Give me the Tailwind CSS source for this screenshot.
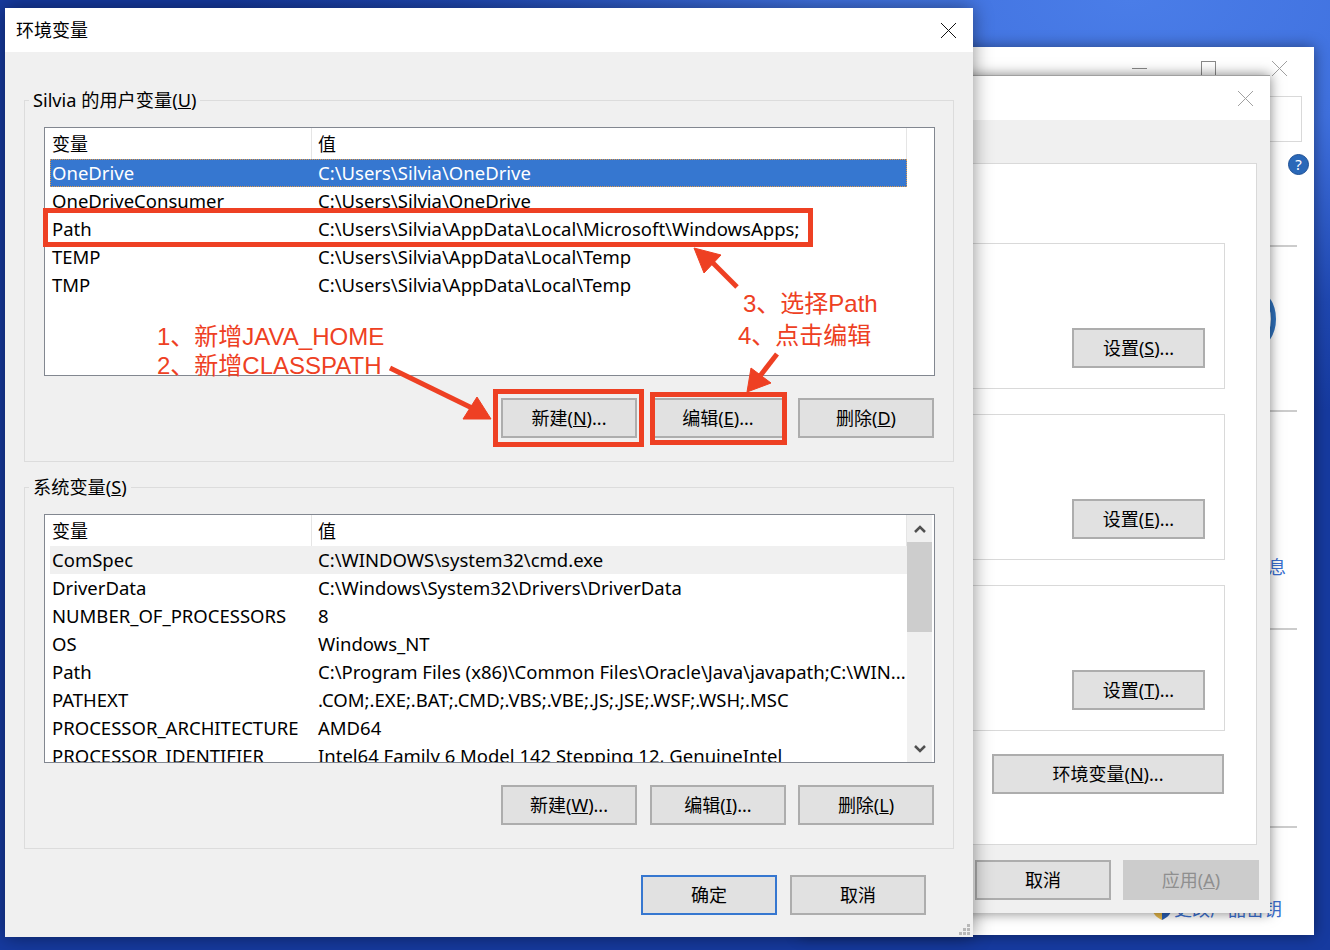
<!DOCTYPE html>
<html lang="zh-CN">

<head>
    <meta charset="utf-8">
    <title>环境变量</title>
    <script src="https://cdn.jsdelivr.net/npm/@tailwindcss/browser@4"></script>
</head>

<body class="m-0 overflow-hidden">
    <div class="relative w-[1330px] h-[950px] overflow-hidden bg-[radial-gradient(ellipse_900px_420px_at_1130px_0px,#4a7de8_0%,#3f70de_35%,#1f47b0_75%,#163a9f_100%)] bg-[#163a9f] text-black text-[18px] font-['Noto_Sans','Noto_Sans_CJK_SC',sans-serif]">

        <!-- Back window: system -->
        <div class="absolute left-[800px] top-[47px] w-[514px] h-[888px] bg-white shadow-[0_0_14px_rgba(0,0,0,0.45)]">
            <div class="absolute left-[332px] top-[21px] w-[15px] h-px bg-[#8a8a8a]"></div>
            <div class="absolute left-[401px] top-[14px] w-[15px] h-[15px] border border-[#8a8a8a]"></div>
            <svg class="absolute left-[472px] top-[14px]" width="15" height="15" viewBox="0 0 15 15" fill="none" stroke="#a0a0a0"><path d="M0 0L15 15M15 0L0 15" /></svg>
            <div class="absolute left-[380px] top-[49px] w-[122px] h-[46px] border border-[#d9d9d9]"></div>
            <div class="absolute left-[488px] top-[107px] w-[21px] h-[21px] rounded-full bg-[#2a68b8] border border-[#1d4f94] flex items-center justify-center text-white text-[15px] leading-none">?</div>
            <div class="absolute left-[300px] top-[198px] w-[197px] h-[2px] bg-[#cccccc]"></div>
            <div class="absolute left-[300px] top-[363px] w-[197px] h-[2px] bg-[#cccccc]"></div>
            <div class="absolute left-[300px] top-[581px] w-[197px] h-[2px] bg-[#cccccc]"></div>
            <div class="absolute left-[300px] top-[779px] w-[197px] h-[2px] bg-[#cccccc]"></div>
            <div class="absolute left-[400px] top-[234px] w-[76px] h-[76px] rounded-full border-[5px] border-[#2f72bd]"></div>
            <div class="absolute left-[440px] top-[508px] w-[46px] text-right text-[#3a6fd0] leading-6">信息</div>
            <svg class="absolute left-[353px] top-[853px]" width="18" height="20" viewBox="0 0 18 20"><path d="M9 0L18 3V10C18 15 13 18 9 20V0Z" fill="#2a5fb5" /><path d="M9 0L0 3V10C0 15 5 18 9 20V0Z" fill="#e6b84a" /></svg>
            <div class="absolute left-[374px] top-[850px] text-[#3a6fd0] leading-6 whitespace-nowrap">更改产品密钥</div>
        </div>

        <!-- Middle window: system properties -->
        <div class="absolute left-[900px] top-[75px] w-[370px] h-[838px] flex flex-col bg-[#f0f0f0] border-t border-[#a0a0a0] shadow-[0_0_12px_rgba(0,0,0,0.5)]">
            <div class="h-[44px] shrink-0 bg-white flex justify-end items-center pr-[17px]">
                <svg width="15" height="15" viewBox="0 0 15 15" fill="none" stroke="#a0a0a0"><path d="M0 0L15 15M15 0L0 15" /></svg>
            </div>
            <div class="mt-[43px] mr-[13px] h-[682px] shrink-0 bg-white border border-[#d9d9d9] pt-[79px] flex flex-col items-end">
                <div class="mr-[31px] w-[340px] h-[146px] border border-[#d9d9d9] flex justify-end items-end pr-[19px] pb-[20px]">
                    <button class="w-[133px] h-[40px] bg-[#e1e1e1] border-2 border-[#adadad] leading-none">设置(<u>S</u>)...</button>
                </div>
                <div class="mt-[25px] mr-[31px] w-[340px] h-[146px] border border-[#d9d9d9] flex justify-end items-end pr-[19px] pb-[20px]">
                    <button class="w-[133px] h-[40px] bg-[#e1e1e1] border-2 border-[#adadad] leading-none">设置(<u>E</u>)...</button>
                </div>
                <div class="mt-[25px] mr-[31px] w-[340px] h-[146px] border border-[#d9d9d9] flex justify-end items-end pr-[19px] pb-[20px]">
                    <button class="w-[133px] h-[40px] bg-[#e1e1e1] border-2 border-[#adadad] leading-none">设置(<u>T</u>)...</button>
                </div>
                <button class="mt-[23px] mr-[32px] w-[232px] h-[40px] bg-[#e1e1e1] border-2 border-[#adadad] leading-none">环境变量(<u>N</u>)...</button>
            </div>
            <div class="mt-[15px] pr-[11px] flex justify-end gap-3">
                <button class="w-[136px] h-[40px] bg-[#e1e1e1] border-2 border-[#adadad] leading-none">取消</button>
                <button class="w-[136px] h-[40px] bg-[#cccccc] border-2 border-[#cccccc] text-[#8f8f8f] leading-none">应用(<u>A</u>)</button>
            </div>
        </div>

        <!-- Front dialog -->
        <div class="absolute left-[5px] top-[8px] w-[968px] h-[929px] flex flex-col bg-[#f0f0f0] shadow-[0_0_18px_rgba(0,0,0,0.45)]">
            <div class="h-[44px] shrink-0 bg-white flex items-center justify-between pl-[11px] pr-[17px]">
                <span>环境变量</span>
                <svg width="15" height="15" viewBox="0 0 15 15" fill="none" stroke="#111111"><path d="M0 0L15 15M15 0L0 15" /></svg>
            </div>

            <!-- User variables -->
            <div class="relative mt-[48px] ml-[19px] w-[930px] h-[362px] shrink-0 border border-[#dcdcdc] pt-[26px] pl-[19px]">
                <span class="absolute left-[4px] -top-[13px] px-[4px] bg-[#f0f0f0] leading-6 text-[18.2px]">Silvia 的用户变量(<u>U</u>)</span>
                <div class="w-[891px] h-[249px] bg-white border border-[#828790] overflow-hidden text-[18.5px]">
                    <div class="flex h-[31px] ml-[5px] w-[857px] border-r border-[#e5e5e5] text-[18px]">
                        <div class="w-[262px] pl-[2px] pt-px leading-[31px] border-r border-[#e5e5e5]">变量</div>
                        <div class="pl-[6px] pt-px leading-[31px]">值</div>
                    </div>
                    <div class="flex h-[28px] ml-[5px] w-[857px] leading-[26px] bg-[#3677d0] text-white border border-dotted border-[#e09a4a]">
                        <div class="w-[262px] pl-[1px]">OneDrive</div><div class="pl-[5px]">C:\Users\Silvia\OneDrive</div>
                    </div>
                    <div class="flex h-[28px] ml-[5px] leading-[28px]"><div class="w-[263px] pl-[2px]">OneDriveConsumer</div><div class="pl-[5px]">C:\Users\Silvia\OneDrive</div></div>
                    <div class="flex h-[28px] ml-[5px] leading-[28px]"><div class="w-[263px] pl-[2px]">Path</div><div class="pl-[5px]">C:\Users\Silvia\AppData\Local\Microsoft\WindowsApps;</div></div>
                    <div class="flex h-[28px] ml-[5px] leading-[28px]"><div class="w-[263px] pl-[2px]">TEMP</div><div class="pl-[5px]">C:\Users\Silvia\AppData\Local\Temp</div></div>
                    <div class="flex h-[28px] ml-[5px] leading-[28px]"><div class="w-[263px] pl-[2px]">TMP</div><div class="pl-[5px]">C:\Users\Silvia\AppData\Local\Temp</div></div>
                </div>
                <div class="mt-[22px] w-[890px] flex justify-end">
                    <button class="w-[136px] h-[40px] bg-[#e1e1e1] border-2 border-[#adadad] leading-none">新建(<u>N</u>)...</button>
                    <button class="ml-[13px] w-[136px] h-[40px] bg-[#e1e1e1] border-2 border-[#adadad] leading-none">编辑(<u>E</u>)...</button>
                    <button class="ml-3 w-[136px] h-[40px] bg-[#e1e1e1] border-2 border-[#adadad] leading-none">删除(<u>D</u>)</button>
                </div>
            </div>

            <!-- System variables -->
            <div class="relative mt-[25px] ml-[19px] w-[930px] h-[362px] shrink-0 border border-[#dcdcdc] pt-[26px] pl-[19px]">
                <span class="absolute left-[4px] -top-[13px] px-[4px] bg-[#f0f0f0] leading-6 text-[18.2px]">系统变量(<u>S</u>)</span>
                <div class="flex w-[891px] h-[249px] bg-white border border-[#828790] overflow-hidden text-[18.5px]">
                    <div class="w-[862px] shrink-0 overflow-hidden">
                        <div class="flex h-[31px] ml-[5px] w-[857px] border-r border-[#e5e5e5] text-[18px]">
                            <div class="w-[262px] pl-[2px] pt-px leading-[31px] border-r border-[#e5e5e5]">变量</div>
                            <div class="pl-[6px] pt-px leading-[31px]">值</div>
                        </div>
                        <div class="flex h-[28px] ml-[5px] w-[857px] leading-[28px] bg-[#f0f0f0]"><div class="w-[263px] pl-[2px]">ComSpec</div><div class="pl-[5px]">C:\WINDOWS\system32\cmd.exe</div></div>
                        <div class="flex h-[28px] ml-[5px] leading-[28px]"><div class="w-[263px] pl-[2px]">DriverData</div><div class="pl-[5px]">C:\Windows\System32\Drivers\DriverData</div></div>
                        <div class="flex h-[28px] ml-[5px] leading-[28px]"><div class="w-[263px] pl-[2px]">NUMBER_OF_PROCESSORS</div><div class="pl-[5px]">8</div></div>
                        <div class="flex h-[28px] ml-[5px] leading-[28px]"><div class="w-[263px] pl-[2px]">OS</div><div class="pl-[5px]">Windows_NT</div></div>
                        <div class="flex h-[28px] ml-[5px] leading-[28px]"><div class="w-[263px] pl-[2px]">Path</div><div class="pl-[5px] whitespace-nowrap">C:\Program Files (x86)\Common Files\Oracle\Java\javapath;C:\WIN...</div></div>
                        <div class="flex h-[28px] ml-[5px] leading-[28px]"><div class="w-[263px] pl-[2px]">PATHEXT</div><div class="pl-[5px] whitespace-nowrap">.COM;.EXE;.BAT;.CMD;.VBS;.VBE;.JS;.JSE;.WSF;.WSH;.MSC</div></div>
                        <div class="flex h-[28px] ml-[5px] leading-[28px]"><div class="w-[263px] pl-[2px] whitespace-nowrap">PROCESSOR_ARCHITECTURE</div><div class="pl-[5px]">AMD64</div></div>
                        <div class="flex h-[28px] ml-[5px] leading-[28px]"><div class="w-[263px] pl-[2px] whitespace-nowrap">PROCESSOR_IDENTIFIER</div><div class="pl-[5px] whitespace-nowrap">Intel64 Family 6 Model 142 Stepping 12, GenuineIntel</div></div>
                    </div>
                    <div class="w-[27px] bg-[#f0f0f0] border-r-2 border-white flex flex-col items-center">
                        <svg class="mt-[10px] shrink-0" width="12" height="8" viewBox="0 0 12 8" fill="none" stroke="#505050" stroke-width="2.5"><path d="M1 7L6 2L11 7" /></svg>
                        <div class="mt-[9px] w-full h-[90px] bg-[#cdcdcd]"></div>
                        <svg class="mt-auto mb-[9px] shrink-0" width="12" height="8" viewBox="0 0 12 8" fill="none" stroke="#505050" stroke-width="2.5"><path d="M1 1L6 6L11 1" /></svg>
                    </div>
                </div>
                <div class="mt-[22px] w-[890px] flex justify-end">
                    <button class="w-[136px] h-[40px] bg-[#e1e1e1] border-2 border-[#adadad] leading-none">新建(<u>W</u>)...</button>
                    <button class="ml-[13px] w-[136px] h-[40px] bg-[#e1e1e1] border-2 border-[#adadad] leading-none">编辑(<u>I</u>)...</button>
                    <button class="ml-3 w-[136px] h-[40px] bg-[#e1e1e1] border-2 border-[#adadad] leading-none">删除(<u>L</u>)</button>
                </div>
            </div>

            <div class="mt-[26px] pr-[47px] flex justify-end gap-[13px]">
                <button class="w-[136px] h-[40px] bg-[#e1e1e1] border-2 border-[#3677d0] leading-none">确定</button>
                <button class="w-[136px] h-[40px] bg-[#e1e1e1] border-2 border-[#adadad] leading-none">取消</button>
            </div>

            <svg class="absolute right-[3px] bottom-[2px]" width="11" height="11" viewBox="0 0 11 11" fill="#b8b8b8"><rect x="8" y="0" width="3" height="3" /><rect x="4" y="4" width="3" height="3" /><rect x="8" y="4" width="3" height="3" /><rect x="0" y="8" width="3" height="3" /><rect x="4" y="8" width="3" height="3" /><rect x="8" y="8" width="3" height="3" /></svg>
        </div>

        <!-- Annotations -->
        <div class="absolute left-[43px] top-[208px] w-[770px] h-[39px] border-[5px] border-[#ee4023]"></div>
        <div class="absolute left-[493px] top-[389px] w-[151px] h-[58px] border-[5px] border-[#ee4023]"></div>
        <div class="absolute left-[650px] top-[392px] w-[137px] h-[53px] border-[5px] border-[#ee4023]"></div>
        <svg class="absolute left-0 top-0 pointer-events-none" width="1330" height="950" fill="#ee4023" stroke="#ee4023">
            <path d="M390 368L472 408" stroke-width="5" fill="none" />
            <path d="M491 419L463 419L477 397Z" />
            <path d="M737 287L710 260" stroke-width="5" fill="none" />
            <path d="M694 248L704 273L721 255Z" />
            <path d="M777 354L760 376" stroke-width="5" fill="none" />
            <path d="M747 392L751 368L771 383Z" />
        </svg>
        <div class="absolute left-[157px] top-[323px] text-[#ee4023] text-[24px] leading-[28px] whitespace-nowrap font-['Liberation_Sans','Noto_Sans_CJK_SC',sans-serif]">1、新增JAVA_HOME</div>
        <div class="absolute left-[157px] top-[352px] text-[#ee4023] text-[24px] leading-[28px] whitespace-nowrap font-['Liberation_Sans','Noto_Sans_CJK_SC',sans-serif]">2、新增CLASSPATH</div>
        <div class="absolute left-[743px] top-[290px] text-[#ee4023] text-[24px] leading-[28px] whitespace-nowrap font-['Liberation_Sans','Noto_Sans_CJK_SC',sans-serif]">3、选择Path</div>
        <div class="absolute left-[738px] top-[322px] text-[#ee4023] text-[24px] leading-[28px] whitespace-nowrap font-['Liberation_Sans','Noto_Sans_CJK_SC',sans-serif]">4、点击编辑</div>
    </div>
</body>

</html>
